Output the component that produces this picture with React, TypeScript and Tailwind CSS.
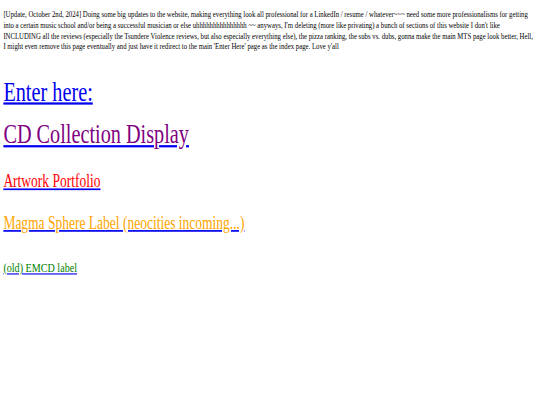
import React from "react";

export default function App() {
  return (
    <div className="w-[540px] h-[405px] overflow-hidden bg-white">
      <div className="w-[1280px] h-[720px] origin-top-left scale-x-[0.421875] scale-y-[0.5625] px-[8px] pt-[17px] font-['Liberation_Serif',serif] text-black text-[16px] leading-[normal]">
        <p className="m-0 leading-[18.8px]">
          [Update, October 2nd, 2024] Doing some big updates to the website, making everything look all professional for a LinkedIn / resume / whatever~~~ need some more professionalisms for getting into a certain music school and/or being a successful musician or else uhhhhhhhhhhhhhhh ~~ anyways, I'm deleting (more like privating) a bunch of sections of this website I don't like
          <br />
          INCLUDING all the reviews (especially the Tsundere Violence reviews, but also especially everything else), the pizza ranking, the subs vs. dubs, gonna make the main MTS page look better, Hell, I might even remove this page eventually and just have it redirect to the main 'Enter Here' page as the index page. Love y'all
        </p>
        <div className="mt-[43px] text-[48px] leading-[normal]">
          <a href="#" className="text-[#0000ee] underline">Enter here:</a>
        </div>
        <div className="mt-[21px] text-[48px] leading-[normal]">
          <a href="#" className="text-[#0000ee] underline">
            <span className="text-[#800080]">CD Collection Display</span>
          </a>
        </div>
        <div className="mt-[38px] text-[32px] leading-[normal]">
          <a href="#" className="text-[#0000ee] underline">
            <span className="text-[#ff0000]">Artwork Portfolio</span>
          </a>
        </div>
        <div className="mt-[37px] text-[32px] leading-[normal]">
          <a href="#" className="text-[#0000ee] underline">
            <span className="text-[#ffa500]">Magma Sphere Label (neocities incoming...)</span>
          </a>
        </div>
        <div className="mt-[48px] text-[24px] leading-[normal]">
          <a href="#" className="text-[#0000ee] underline">
            <span className="text-[#008000]">(old) EMCD label</span>
          </a>
        </div>
      </div>
    </div>
  );
}
